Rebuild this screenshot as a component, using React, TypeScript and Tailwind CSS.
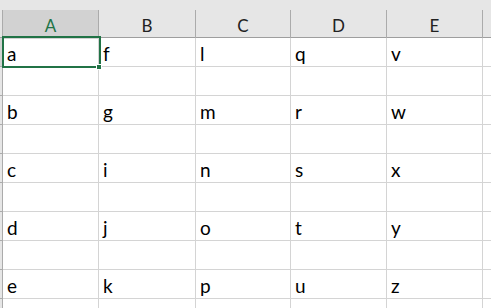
import React from "react";

const cols = ["A", "B", "C", "D", "E"];
const data: string[][] = [
    ["a", "f", "l", "q", "v"],
    ["", "", "", "", ""],
    ["b", "g", "m", "r", "w"],
    ["", "", "", "", ""],
    ["c", "i", "n", "s", "x"],
    ["", "", "", "", ""],
    ["d", "j", "o", "t", "y"],
    ["", "", "", "", ""],
    ["e", "k", "p", "u", "z"],
    ["", "", "", "", ""],
];

const gridCols = "grid grid-cols-[3px_96px_97px_95px_96px_96px_1fr]";

export default function App() {
    return (
        <div
            className="relative w-[491px] h-[308px] overflow-hidden bg-white text-[19px] text-black"
            style={{ fontFamily: "Lato, 'Open Sans', sans-serif" }}
        >
            <div className="h-[10px] bg-[#e6e6e6]" />
            <HeaderRow />
            {data.map((row, i) => (
                <DataRow key={i} index={i} cells={row} />
            ))}
            {/* selected cell A1 */}
            <div className="absolute left-[2px] top-[36px] w-[99px] h-[32px] border-2 border-[#217346]" />
            <div className="absolute left-[96px] top-[64px] w-[6px] h-[6px] bg-[#217346] border border-white" />
        </div>
    );
}

function HeaderRow() {
    return (
        <div className={`${gridCols} h-[28px] bg-[#e6e6e6] border-b border-[#9e9e9e]`}>
            <div className="border-r border-[#ababab]" />
            {cols.map((c) => (
                <div
                    key={c}
                    className={
                        c === "A"
                            ? "flex items-center justify-center pt-[3px] border-r border-[#ababab] bg-[#d2d2d2] text-[#217346] text-[17px]"
                            : "flex items-center justify-center pt-[3px] border-r border-[#ababab] text-[#222] text-[17px]"
                    }
                >
                    {c}
                </div>
            ))}
            <div />
        </div>
    );
}

interface DataRowProps {
    index: number;
    cells: string[];
}
function DataRow({ index, cells }: DataRowProps) {
    return (
        <div className={`${gridCols} h-[29px]`}>
            <div
                className={
                    index === 0
                        ? "bg-[#d2d2d2] border-r border-b border-[#ababab]"
                        : "bg-[#e6e6e6] border-r border-b border-[#ababab]"
                }
            />
            {cells.map((v, j) => (
                <div
                    key={j}
                    className="flex items-end pl-[4px] pb-[3px] border-r border-b border-[#d4d4d4] leading-none"
                >
                    {v}
                </div>
            ))}
            <div className="border-b border-[#d4d4d4]" />
        </div>
    );
}
